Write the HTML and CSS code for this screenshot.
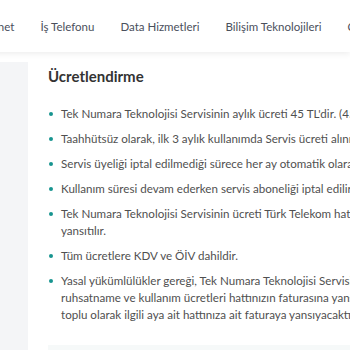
FILE: index.html
```html
<!DOCTYPE html>
<html lang="tr">
<head>
    <meta charset="UTF-8">
    <meta name="viewport" content="width=device-width, initial-scale=1.0">
    <title>Tek Numara Teknolojisi</title>
    <link rel="stylesheet" href="styles.css">
</head>
<body>
    <nav class="topnav">
        <a href="#">İnternet</a>
        <a href="#">İş Telefonu</a>
        <a href="#">Data Hizmetleri</a>
        <a href="#">Bilişim Teknolojileri</a>
        <a href="#">Cihazlar</a>
    </nav>
    <div class="page">
        <div class="side"></div>
        <div class="content">
            <h2>Ücretlendirme</h2>
            <ul class="fees">
                <li>Tek Numara Teknolojisi Servisinin aylık ücreti 45 TL'dir. (45 TL+KDV+ÖİV)</li>
                <li>Taahhütsüz olarak, ilk 3 aylık kullanımda Servis ücreti alınmaz.</li>
                <li>Servis üyeliği iptal edilmediği sürece her ay otomatik olarak yenilenir.</li>
                <li>Kullanım süresi devam ederken servis aboneliği iptal edilirse ücret iadesi yapılmaz.</li>
                <li>Tek Numara Teknolojisi Servisinin ücreti Türk Telekom hattınızın faturasına<br>yansıtılır.</li>
                <li>Tüm ücretlere KDV ve ÖİV dahildir.</li>
                <li>Yasal yükümlülükler gereği, Tek Numara Teknolojisi Servisi için alınan<br>ruhsatname ve kullanım ücretleri hattınızın faturasına yansıtılır ve<br>toplu olarak ilgili aya ait hattınıza ait faturaya yansıyacaktır.</li>
            </ul>
            <div class="next-box"></div>
        </div>
    </div>
</body>
</html>
```

FILE: styles.css
```css
body {
    margin: 0;
    font-family: Lato, "Open Sans", sans-serif;
    color: #505050;
    background: #fff;
    overflow: hidden;
    height: 350px;
}
.topnav {
    height: 52px;
    display: flex;
    align-items: center;
    gap: 26px;
    margin-left: -26px;
    white-space: nowrap;
    background: #fff;
    box-shadow: 0 2px 6px rgba(0, 0, 0, 0.07);
    position: relative;
    overflow: hidden;
}
.topnav a {
    font-size: 11.5px;
    color: #4a4f5c;
    text-decoration: none;
    flex-shrink: 0;
}
.page {
    display: flex;
    margin-top: 10px;
}
.side {
    width: 28px;
    flex-shrink: 0;
    background: #f4f5f7;
}
.content {
    padding-left: 20px;
    width: 500px;
    flex-shrink: 0;
}
h2 {
    margin: 0;
    padding-top: 4px;
    font-size: 15px;
    line-height: 20px;
    font-weight: 700;
    color: #333;
}
.fees {
    list-style: none;
    margin: 19px 0 0;
    padding: 0;
}
.fees li {
    position: relative;
    padding-left: 13px;
    font-size: 11.6px;
    line-height: 17px;
    margin-bottom: 8px;
    white-space: nowrap;
}
.fees li::before {
    content: "";
    position: absolute;
    left: 1px;
    top: 7px;
    width: 4px;
    height: 4px;
    border-radius: 50%;
    background: #17948f;
}
.next-box {
    margin-top: 22px;
    height: 40px;
    background: #f6f9f9;
}
```
